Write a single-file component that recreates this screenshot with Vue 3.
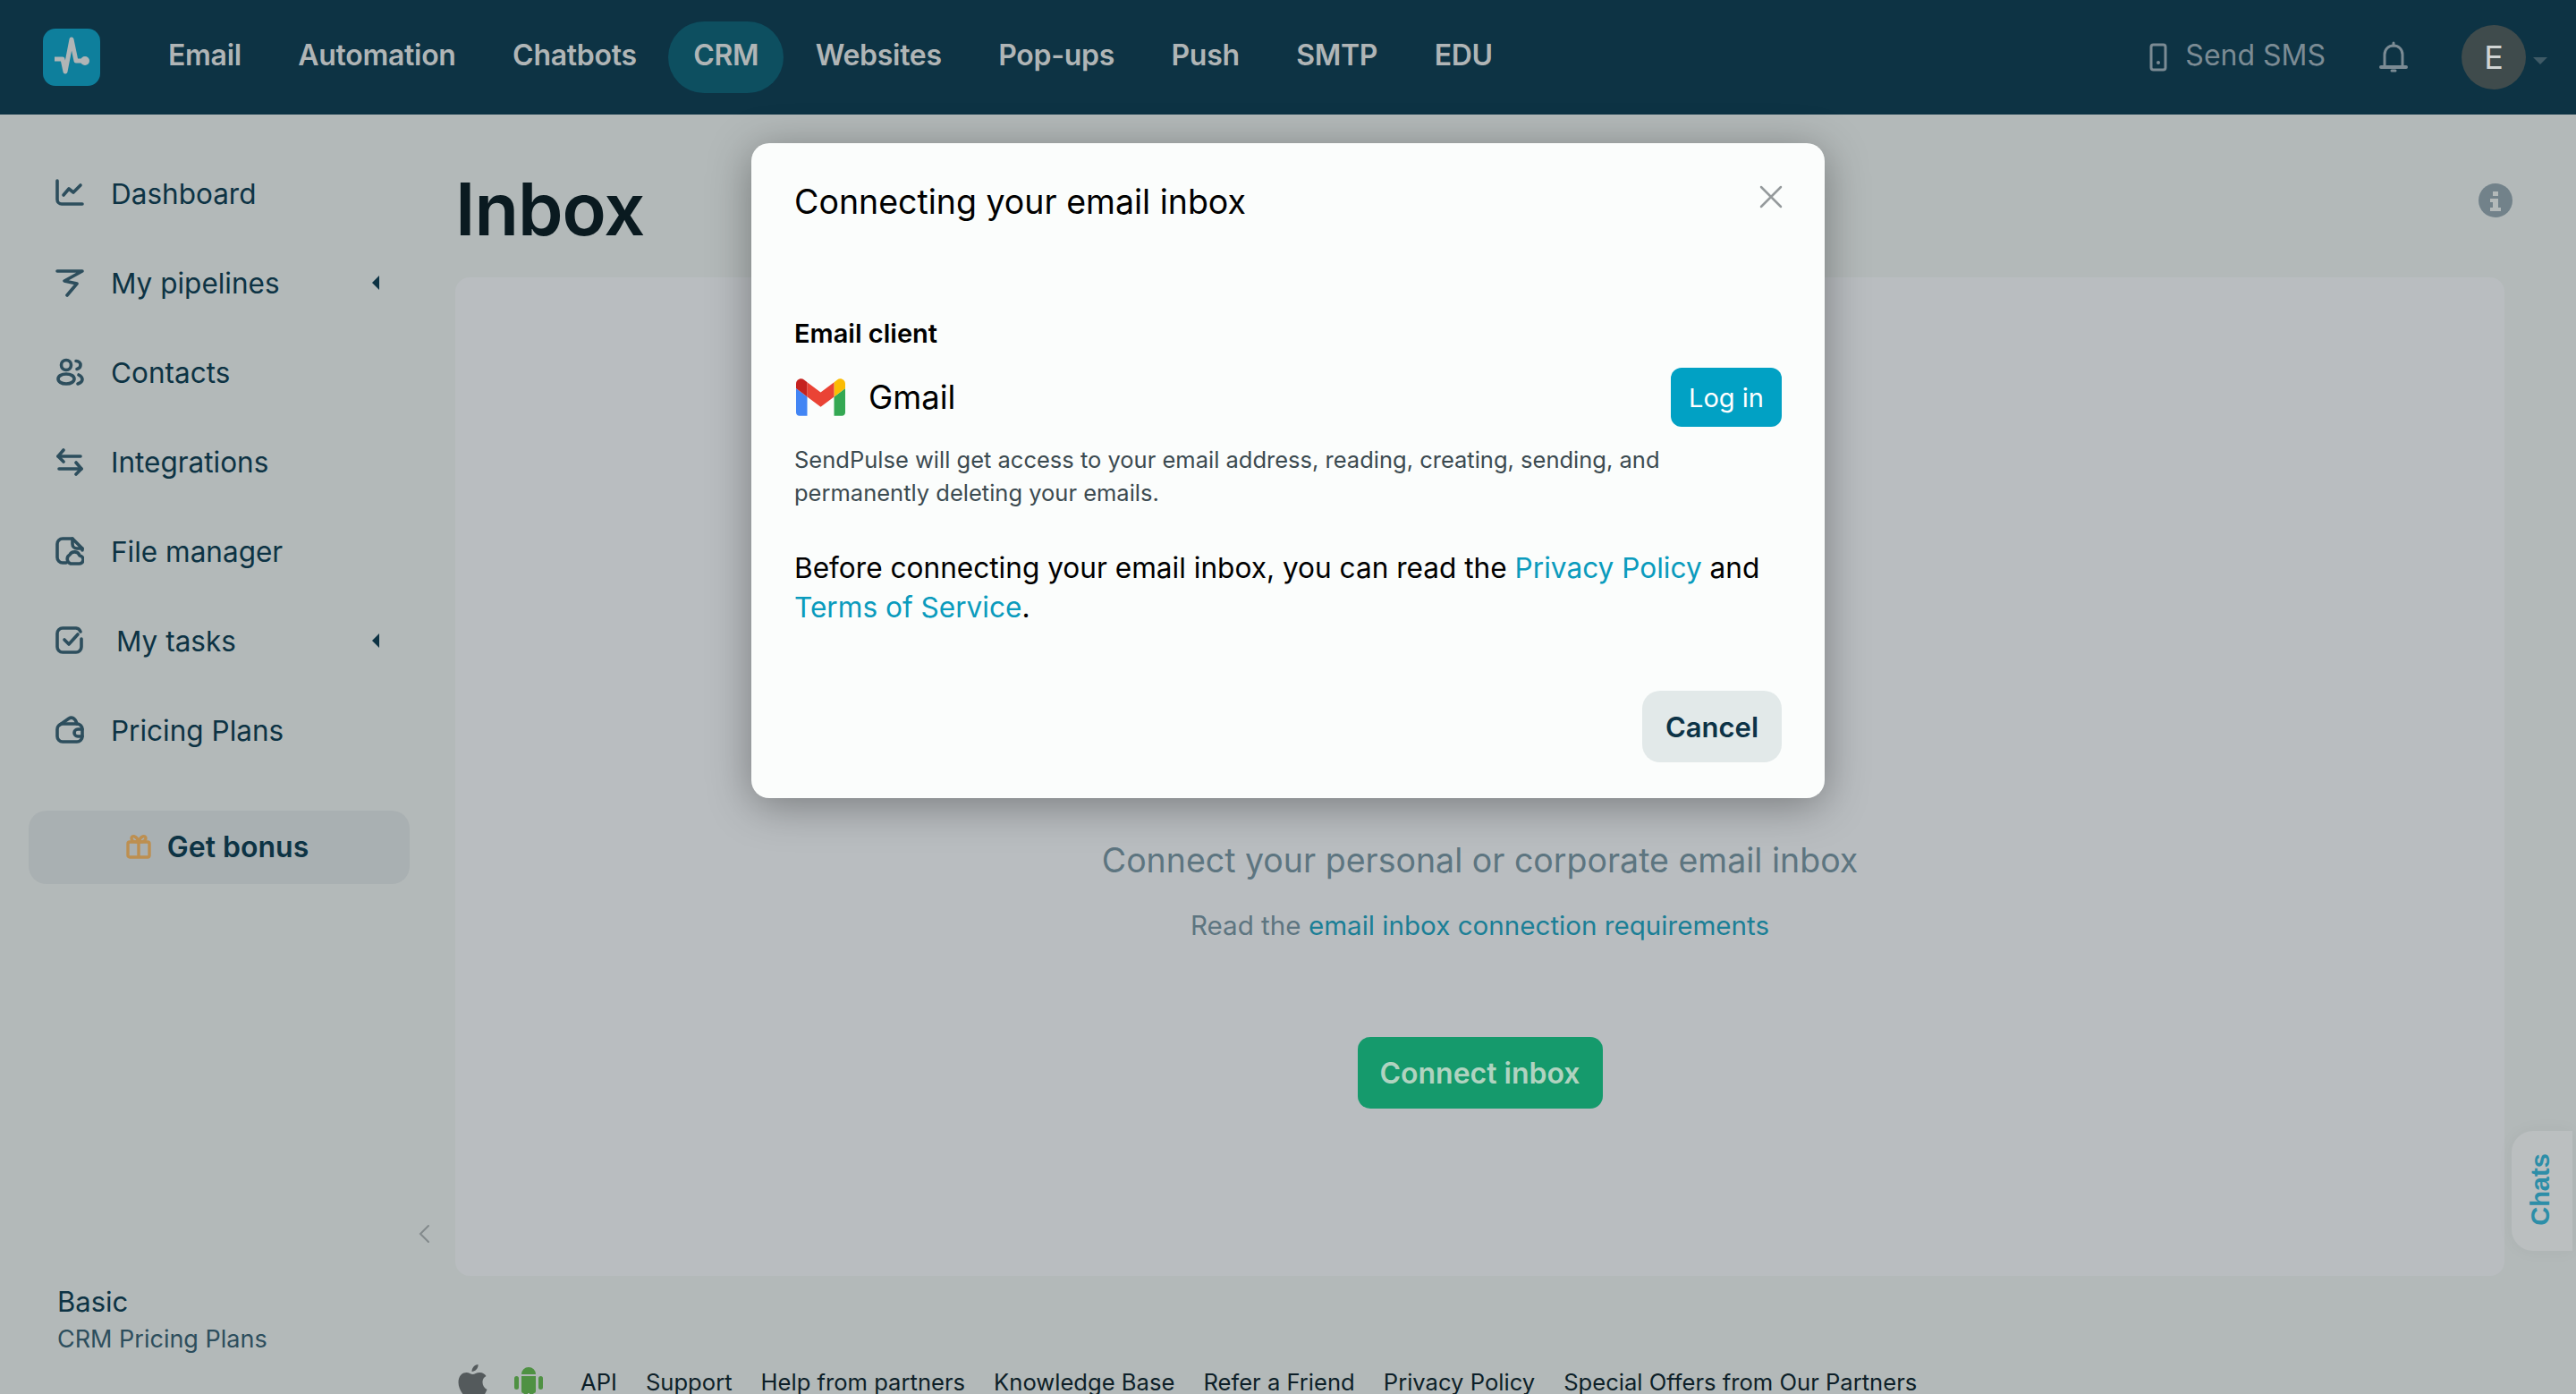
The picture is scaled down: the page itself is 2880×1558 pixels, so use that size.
<template>
  <div class="app">
    <header class="topbar">
      <div class="logo">
        <svg viewBox="0 0 64 64" width="64" height="64">
          <path d="M13 34h9l3 14 7-36 5 24h9" class="pulse" />
          <circle cx="47" cy="36" r="5" fill="#b0b5b6" />
        </svg>
      </div>
      <nav class="topnav">
        <a v-for="item in topNav" :key="item" :class="['topnav-item', { active: item === 'CRM' }]">{{ item }}</a>
      </nav>
      <div class="top-right">
        <a class="sms">
          <svg viewBox="0 0 20 32" width="20" height="32" fill="none">
            <rect x="2" y="2" width="16" height="28" rx="2.5" stroke="#7b8b94" stroke-width="3" />
            <circle cx="10" cy="22" r="2" fill="#7b8b94" />
          </svg>
          <span>Send SMS</span>
        </a>
        <svg class="bell" viewBox="0 0 32 36" width="32" height="36" fill="none" stroke="#7b8b94" stroke-width="3" stroke-linecap="round">
          <path d="M6 28V15c0-6 4.500-10 10-10s10 4 10 10v13" />
          <path d="M2 29h28" stroke-width="4" />
          <path d="M16 2v3" />
          <path d="M14 33h4" />
        </svg>
        <div class="avatar">E</div>
        <span class="caret"></span>
      </div>
    </header>

    <div class="page">
      <aside class="sidebar">
        <ul class="side-menu">
          <li v-for="row in sideMenu" :key="row.label" class="side-row">
            <svg viewBox="0 0 32 32" width="32" height="32" fill="none" stroke="#2d4e5d" stroke-width="3.6" stroke-linecap="round" stroke-linejoin="round">
              <path v-for="d in row.paths" :key="d" :d="d" />
            </svg>
            <span :class="['side-label', { shifted: row.label === 'My tasks' }]">{{ row.label }}</span>
            <span v-if="row.sub" class="side-arrow"></span>
          </li>
        </ul>
        <button class="bonus">
          <svg viewBox="0 0 28 28" width="28" height="28" fill="none" stroke="#bd8f50" stroke-width="3.4" stroke-linejoin="round">
            <rect x="2" y="9" width="24" height="17" rx="2" />
            <path d="M14 9v17" />
            <path d="M14 9c-3 0-8 0-8-4 0-4 6-3 8 4zM14 9c3 0 8 0 8-4 0-4-6-3-8 4z" />
          </svg>
          <span>Get bonus</span>
        </button>
        <svg class="collapse" viewBox="0 0 14 22" width="14" height="22" fill="none" stroke="#838a8c" stroke-width="2" stroke-linecap="round">
          <path d="M12 2 3 11l9 9" />
        </svg>
        <div class="plan">
          <div class="plan-name">Basic</div>
          <div class="plan-sub">CRM Pricing Plans</div>
        </div>
      </aside>

      <main class="content">
        <div class="title-row">
          <h1>Inbox</h1>
          <svg class="info" viewBox="0 0 38 38" width="38" height="38">
            <circle cx="19" cy="19" r="19" fill="#72828a" />
            <path d="M16 9h6v5h-6zM13 17h9v10h3v4H13v-4h3v-6h-3z" fill="#b3b9b9" />
          </svg>
        </div>
        <section class="card">
          <h2>Connect your personal or corporate email inbox</h2>
          <p>Read the <a>email inbox connection requirements</a></p>
          <button class="connect">Connect inbox</button>
        </section>
        <footer class="foot">
          <svg class="apple" viewBox="0 0 32 38" width="33" height="38" fill="#545a5c">
            <path d="M22 0c.5 4-3 8-7 8 0-4 3-8 7-8zM16 11c2 0 4-2 8-2 3 0 6 2 7 4-6 3-5 12 1 15-2 5-5 10-8 10-2 0-3-1-6-1s-4 1-6 1C7 38 0 28 0 20 0 12 5 9 9 9c3 0 5 2 7 2z" />
          </svg>
          <svg class="android" viewBox="0 0 32 38" width="32" height="38" fill="#4f9143">
            <path d="M8 11a8 8 0 0 1 16 0zM8 13h16v17a2 2 0 0 1-2 2H10a2 2 0 0 1-2-2z" />
            <rect x="0" y="13" width="5" height="15" rx="2.500" />
            <rect x="27" y="13" width="5" height="15" rx="2.500" />
            <rect x="10.500" y="30" width="4.500" height="8" rx="2.200" />
            <rect x="17" y="30" width="4.500" height="8" rx="2.200" />
          </svg>
          <a v-for="link in footLinks" :key="link">{{ link }}</a>
        </footer>
      </main>
    </div>

    <button class="chats"><span>Chats</span></button>

    <div class="modal">
      <svg class="close" viewBox="0 0 26 26" width="26" height="26" stroke="#959a9c" stroke-width="2.500" stroke-linecap="round">
        <path d="M2 2l22 22M24 2 2 24" />
      </svg>
      <div class="modal-title">Connecting your email inbox</div>
      <div class="client-label">Email client</div>
      <div class="client-row">
        <svg class="gmail" viewBox="52 42 88 66" width="55" height="42">
          <path fill="#4285f4" d="M58 108h14V74L52 59v43c0 3.320 2.690 6 6 6" />
          <path fill="#34a853" d="M120 108h14c3.320 0 6-2.690 6-6V59l-20 15" />
          <path fill="#fbbc04" d="M120 48v26l20-15v-8c0-7.420-8.470-11.650-14.400-7.200" />
          <path fill="#ea4335" d="M72 74V48l24 18 24-18v26L96 92" />
          <path fill="#c5221f" d="M52 51v8l20 15V48l-5.600-4.200c-5.940-4.450-14.400-.22-14.400 7.200" />
        </svg>
        <span class="client-name">Gmail</span>
        <button class="login">Log in</button>
      </div>
      <p class="access">SendPulse will get access to your email address, reading, creating, sending, and permanently deleting your emails.</p>
      <p class="policy">Before connecting your email inbox, you can read the <a>Privacy Policy</a> and <a>Terms of Service</a>.</p>
      <div class="modal-foot">
        <button class="cancel">Cancel</button>
      </div>
    </div>
  </div>
</template>

<script setup>
const topNav = ['Email', 'Automation', 'Chatbots', 'CRM', 'Websites', 'Pop-ups', 'Push', 'SMTP', 'EDU']

const sideMenu = [
  { label: 'Dashboard', paths: ['M2 2v21a5 5 0 0 0 5 5h23', 'M9 18l6-7 5 4 8-8'] },
  { label: 'My pipelines', sub: true, paths: ['M2 3h28L10 14l14 3-11 13'] },
  {
    label: 'Contacts',
    paths: [
      'M12 2.500a5.500 5.500 0 1 1 0 11 5.500 5.500 0 0 1 0-11z',
      'M12 18c5.500 0 9 2.500 9 5.500S17.500 29 12 29s-9-2.500-9-5.500S6.500 18 12 18z',
      'M23 3.500c3 0 5 2 5 4.500s-2 4-4 4.500',
      'M26 19c2 1 4 2.500 4 5s-2 4-5 5',
    ],
  },
  { label: 'Integrations', paths: ['M3 10h25', 'M9 3l-6 7 6 6', 'M4 24h25', 'M23 17l6 7-6 6'] },
  {
    label: 'File manager',
    paths: [
      'M12 29H8a6 6 0 0 1-6-6V8a6 6 0 0 1 6-6h11l11 11v2',
      'M19 2v6a5 5 0 0 0 5 5h6',
      'M17 30h9a4.500 4.500 0 0 0 1-9 6 6 0 0 0-11-1 5.500 5.500 0 0 0 1 10z',
    ],
  },
  { label: 'My tasks', sub: true, paths: ['M28 6a6 6 0 0 0-5-4H8a6 6 0 0 0-6 6v15a6 6 0 0 0 6 6h15a6 6 0 0 0 6-6V14', 'M10 15l5 5 10-11'] },
  {
    label: 'Pricing Plans',
    paths: [
      'M8 29a6 6 0 0 1-6-6v-8a6 6 0 0 1 6-6h16a6 6 0 0 1 6 6v8a6 6 0 0 1-6 6z',
      'M5 10 15 3c3-2 7-1 9 6',
      'M30 15h-5a4 4 0 0 0 0 8h5',
    ],
  },
]

const footLinks = ['API', 'Support', 'Help from partners', 'Knowledge Base', 'Refer a Friend', 'Privacy Policy', 'Special Offers from Our Partners']
</script>

<style>
html,
body {
  margin: 0;
  background: #b3b9b9;
  overflow: hidden;
}
</style>

<style scoped>
.app {
  position: relative;
  height: 1558px;
  overflow: hidden;
  background: #b3b9b9;
  font-family: Inter, 'Liberation Sans', sans-serif;
  color: #0d3344;
}

button {
  font-family: inherit;
  border: 0;
  cursor: pointer;
}

/* top bar */
.topbar {
  display: flex;
  align-items: center;
  height: 128px;
  padding: 0 48px;
  background: #0d3344;
  box-sizing: border-box;
}

.logo {
  display: flex;
  width: 64px;
  height: 64px;
  border-radius: 14px;
  background: #0e7f9c;
}

.pulse {
  fill: none;
  stroke: #b0b5b6;
  stroke-width: 5;
  stroke-linejoin: round;
}

.topnav {
  display: flex;
  align-items: center;
  gap: 7.5px;
  margin-left: 48px;
}

.topnav-item {
  padding: 0 28px;
  height: 80px;
  line-height: 76px;
  border-radius: 40px;
  color: #b0b5b6;
  font-size: 32px;
  font-weight: 600;
  letter-spacing: -0.3px;
}

.topnav-item.active {
  background: #0d4f60;
}

.top-right {
  display: flex;
  align-items: center;
  margin-left: auto;
}

.sms {
  display: flex;
  align-items: center;
  gap: 20px;
  color: #7b8b94;
  font-size: 32px;
}

.sms span {
  padding-bottom: 5px;
}

.bell {
  margin-left: 60px;
}

.avatar {
  width: 72px;
  height: 72px;
  margin-left: 60px;
  border-radius: 50%;
  background: #3f4b4c;
  color: #d0d4d4;
  font-size: 36px;
  line-height: 72px;
  text-align: center;
}

.caret {
  width: 0;
  height: 0;
  margin: 8px -16px 0 8px;
  border: 8px solid transparent;
  border-top: 8px solid #3f5a66;
  border-bottom: 0;
}

/* page */
.page {
  display: flex;
  height: 1430px;
}

.sidebar {
  display: flex;
  flex-direction: column;
  flex: 0 0 509px;
  box-sizing: border-box;
  padding-top: 38px;
}

.side-menu {
  margin: 0;
  padding: 0;
  list-style: none;
}

.side-row {
  display: flex;
  align-items: center;
  height: 100px;
  padding: 0 34px 0 62px;
  width: 458px;
  box-sizing: border-box;
}

.side-label {
  margin-left: 30px;
  font-size: 31.500px;
  color: #0d3344;
}

.side-label.shifted {
  margin-left: 36px;
}

.side-arrow {
  width: 0;
  height: 0;
  margin-left: auto;
  border: 8px solid transparent;
  border-right: 8px solid #0d3344;
  border-left: 0;
}

.bonus {
  display: flex;
  align-items: center;
  justify-content: center;
  gap: 18px;
  width: 426px;
  height: 82px;
  margin: 40px 0 0 32px;
  padding: 0 4px 2px 0;
  border-radius: 20px;
  background: #a9b0b2;
  color: #0d3344;
  font-size: 32px;
  font-weight: 600;
}

.collapse {
  align-self: flex-end;
  margin: auto 28px 0 0;
}

.plan {
  padding: 45px 0 43px 64px;
}

.plan-name {
  font-size: 31px;
  line-height: 40px;
}

.plan-sub {
  margin-top: 4px;
  font-size: 27px;
  line-height: 36px;
  color: #2d4e5d;
}

.content {
  flex: 1;
  min-width: 0;
  padding-right: 80px;
}

.title-row {
  display: flex;
  align-items: flex-start;
  justify-content: space-between;
  height: 182px;
}

h1 {
  margin: 15px 0 0;
  font-size: 81px;
  line-height: 182px;
  font-weight: 600;
  color: #0a1a20;
  letter-spacing: -1px;
}

.info {
  margin: 77px -9px 0 0;
}

.card {
  display: flex;
  flex-direction: column;
  align-items: center;
  height: 1116px;
  box-sizing: border-box;
  padding-top: 630px;
  border-radius: 16px;
  background: #b9bdc0;
}

h2 {
  margin: 0;
  font-size: 37.5px;
  line-height: 44px;
  font-weight: 400;
  color: #5d7580;
}

.card p {
  margin: 30px 0 0;
  font-size: 29.6px;
  line-height: 40px;
  color: #5d7580;
}

.card a {
  color: #1b7f96;
}

.connect {
  width: 274px;
  height: 80px;
  margin-top: 105px;
  border-radius: 14px;
  background: #159a6c;
  color: #b0d3c0;
  font-size: 32px;
  font-weight: 600;
}

.foot {
  display: flex;
  align-items: flex-start;
  gap: 32px;
  margin-top: 99px;
  font-size: 25.6px;
  line-height: 40px;
  color: #0d1f28;
}

.foot svg {
  flex-shrink: 0;
}

.apple {
  margin-left: 3px;
}

.android {
  margin-left: -2px;
  margin-right: 10px;
}

/* chats tab */
.chats {
  position: absolute;
  top: 1264px;
  right: 4px;
  display: flex;
  align-items: center;
  justify-content: center;
  width: 68px;
  height: 134px;
  padding: 0 4px 3px 0;
  border-radius: 24px 0 0 24px;
  background: #bbbfc0;
  box-shadow: 0 0 20px rgba(0, 0, 0, 0.04);
}

.chats span {
  transform: rotate(-90deg);
  color: #2d8ea8;
  font-size: 29px;
  font-weight: 600;
  font-family: 'Liberation Sans', sans-serif;
}

/* modal */
.modal {
  position: absolute;
  top: 160px;
  left: 840px;
  width: 1200px;
  height: 732px;
  box-sizing: border-box;
  padding: 0 48px;
  border-radius: 20px;
  background: #fbfdfc;
  box-shadow: 0 8px 48px rgba(0, 0, 0, 0.35);
  color: #000;
}

.close {
  position: absolute;
  top: 47px;
  right: 47px;
}

.modal-title {
  padding-top: 40px;
  font-size: 37.500px;
  line-height: 52px;
}

.client-label {
  margin-top: 101px;
  font-size: 29px;
  line-height: 40px;
  font-weight: 600;
}

.client-row {
  display: flex;
  align-items: center;
  height: 66px;
  margin-top: 18px;
}

.gmail {
  margin-left: 2px;
}

.client-name {
  margin-left: 26px;
  font-size: 36.500px;
}

.login {
  width: 124px;
  height: 66px;
  margin-left: auto;
  border-radius: 12px;
  background: #01a1c4;
  color: #fff;
  font-size: 29px;
}

.access {
  margin: 18px 0 0;
  font-size: 25.500px;
  line-height: 37px;
  color: #3b4a50;
}

.policy {
  margin: 44px 0 0;
  font-size: 31.600px;
  line-height: 44px;
}

.policy a {
  color: #0a9bbd;
}

.modal-foot {
  display: flex;
  justify-content: flex-end;
  margin-top: 71px;
}

.cancel {
  width: 156px;
  height: 80px;
  border-radius: 20px;
  background: #e2e9e9;
  color: #0c3347;
  font-size: 31px;
  font-weight: 600;
}
</style>
